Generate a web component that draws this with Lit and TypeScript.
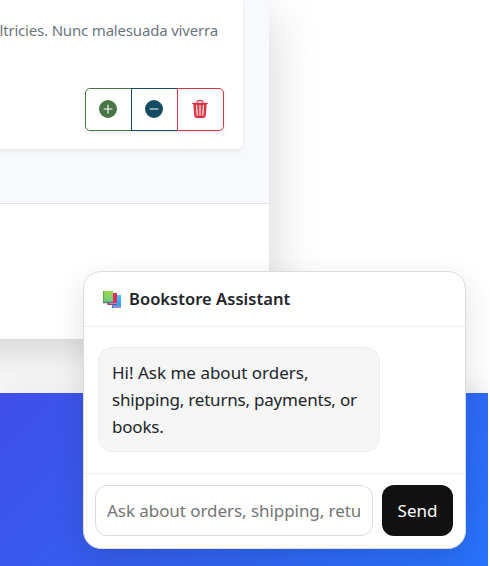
import { LitElement, html, css, svg } from "lit";
import { customElement } from "lit/decorators.js";

@customElement("cart-actions")
class CartActions extends LitElement {
  static styles = css`
    :host { display: flex; width: 139px; height: 43px; border-radius: 5px; box-shadow: 0 2px 4px rgba(0, 0, 0, 0.075); }
    button { box-sizing: border-box; width: 47px; height: 43px; padding: 0 1px 2px 0; background: #fff; border: 1px solid; display: flex; align-items: center; justify-content: center; }
    button + button { margin-left: -1px; }
    svg { width: 18px; height: 18px; fill: currentColor; display: block; }
    .add { color: #4a7446; border-radius: 5px 0 0 5px; }
    .less { color: #154c62; }
    .remove { color: #dc3545; border-radius: 0 5px 5px 0; }
  `;
  render() {
    return html`
      <button class="add" aria-label="Add one"><svg viewBox="0 0 16 16"><path d="M16 8A8 8 0 1 1 0 8a8 8 0 0 1 16 0M8.5 4.5a.5.5 0 0 0-1 0v3h-3a.5.5 0 0 0 0 1h3v3a.5.5 0 0 0 1 0v-3h3a.5.5 0 0 0 0-1h-3z"/></svg></button>
      <button class="less" aria-label="Remove one"><svg viewBox="0 0 16 16"><path d="M16 8A8 8 0 1 1 0 8a8 8 0 0 1 16 0M4.5 7.5a.5.5 0 0 0 0 1h7a.5.5 0 0 0 0-1z"/></svg></button>
      <button class="remove" aria-label="Delete"><svg viewBox="0 0 16 16"><path d="M11 1.5v1h3.5a.5.5 0 0 1 0 1h-.538l-.853 10.66A2 2 0 0 1 11.115 16h-6.23a2 2 0 0 1-1.994-1.84L2.038 3.5H1.5a.5.5 0 0 1 0-1H5v-1A1.5 1.5 0 0 1 6.5 0h3A1.5 1.5 0 0 1 11 1.5m-5 0v1h4v-1a.5.5 0 0 0-.5-.5h-3a.5.5 0 0 0-.5.5M4.5 5.029l.5 8.5a.5.5 0 1 0 .998-.06l-.5-8.5a.5.5 0 1 0-.998.06m6.53-.528a.5.5 0 0 0-.528.47l-.5 8.5a.5.5 0 0 0 .998.058l.5-8.5a.5.5 0 0 0-.47-.528M8 4.5a.5.5 0 0 0-.5.5v8.5a.5.5 0 0 0 1 0V5a.5.5 0 0 0-.5-.5"/></svg></button>
    `;
  }
}

const books = svg`
  <defs>
    <linearGradient id="green" x2="0" y2="1"><stop stop-color="#a0d84c"/><stop offset="1" stop-color="#69d083"/></linearGradient>
    <linearGradient id="blue" x2="0" y2="1"><stop stop-color="#48c5f5"/><stop offset="1" stop-color="#2b9cea"/></linearGradient>
  </defs>
  <path fill="url(#blue)" d="M9 4h9v11H9z"/><path fill="#3478c7" d="M9 15h9v2H9z"/><path fill="#b5a3df" d="M10 15.2h8v1.4h-8z"/>
  <path fill="#e92b64" d="M4.500 2H14v10H4.500z"/><path fill="#a32362" d="M4.500 12H14v2H4.500z"/><path fill="#c886c5" d="M6 12h8v1.200H6z"/>
  <path fill="url(#green)" d="M0 0h10v11H0z"/><path fill="#63a747" d="M0 0h1.200v12H0z"/><path fill="#447c62" d="M0 11h10v1.200H0z"/><path fill="#8491a3" d="M1.500 10.300H10v1H1.500z"/>`;

@customElement("chat-panel")
class ChatPanel extends LitElement {
  static styles = css`
    :host { box-sizing: border-box; display: flex; flex-direction: column; width: 383px; height: 278px; background: #fff; border: 1px solid #dcdcdc; border-radius: 18px; overflow: hidden; box-shadow: 0 10px 30px rgba(0, 0, 0, 0.12); color: #212529; font-family: "Segoe UI", "Noto Sans", sans-serif; }
    header { box-sizing: border-box; height: 55px; padding: 0 19px 2px; display: flex; align-items: center; gap: 8px; border-bottom: 1px solid #eee; }
    header svg { width: 18px; height: 17px; margin-top: 2px; }
    h2 { margin: 0; font-size: 16.5px; line-height: 27px; font-weight: 600; letter-spacing: 0.04px; white-space: nowrap; }
    .messages { flex: 1; padding: 20px 14px; }
    .bubble { box-sizing: border-box; width: 282px; height: 105px; padding: 11px 13px; border: 1px solid #ececec; border-radius: 14px; background: #f6f6f6; font-size: 17px; line-height: 27px; letter-spacing: -0.2px; white-space: nowrap; }
    .greeting { letter-spacing: 0; }
    form { box-sizing: border-box; height: 75px; padding: 11px; display: flex; gap: 9px; border-top: 1px solid #eee; }
    input { box-sizing: border-box; width: 278px; height: 51px; padding: 1px 12px 1px 11px; border: 1px solid #dcdcdc; border-radius: 12px; font: 17px "Segoe UI", "Noto Sans", sans-serif; letter-spacing: -0.06px; background: #fff; }
    input::placeholder { color: #757575; opacity: 1; }
    .send { width: 71px; height: 51px; padding: 0; border: 0; border-radius: 12px; background: #111; color: #fff; font: 17px "Segoe UI", "Noto Sans", sans-serif; }
  `;
  render() {
    return html`
      <header><svg viewBox="0 0 18 17">${books}</svg><h2>Bookstore Assistant</h2></header>
      <div class="messages"><div class="bubble"><span class="greeting">Hi! Ask me about orders,</span><br>shipping, returns, payments, or<br>books.</div></div>
      <form><input placeholder="Ask about orders, shipping, returns..."><button type="button" class="send">Send</button></form>
    `;
  }
}

@customElement("app-root")
class AppRoot extends LitElement {
  static styles = css`
    :host { display: block; position: relative; width: 490px; height: 566px; overflow: hidden; background: #fff; font-family: "Segoe UI", "Noto Sans", sans-serif; }
    .page { width: 488px; height: 393px; overflow: hidden; }
    .content { box-sizing: border-box; width: 569px; height: 339px; margin-left: -300px; background: #fff; box-shadow: 0 16px 48px rgba(0, 0, 0, 0.175); }
    .cart { box-sizing: border-box; height: 204px; background: #f8f9fc; border-bottom: 1px solid #dee2e6; }
    .card { box-sizing: border-box; width: 543px; height: 149px; padding: 18px 19px 18px 0; display: flex; flex-direction: column; justify-content: space-between; align-items: flex-end; background: #fff; border-radius: 0 0 5px 0; box-shadow: 0 2px 4px rgba(0, 0, 0, 0.075); }
    p { margin: 0 6px 0 0; color: #6c757d; font-size: 15px; line-height: 24px; letter-spacing: -0.18px; white-space: nowrap; }
    footer { position: relative; width: 488px; height: 173px; background: linear-gradient(135deg, #404fe8 0%, #2773fc 100%); box-shadow: 0 -6px 24px rgba(0, 0, 0, 0.08); clip-path: inset(-54px 0 0 0); }
    chat-panel { position: absolute; right: 24px; bottom: 17px; }
  `;
  render() {
    return html`
      <div class="page"><main class="content"><section class="cart"><article class="card"><p>ltricies. Nunc malesuada viverra</p><cart-actions></cart-actions></article></section></main></div>
      <footer></footer>
      <chat-panel></chat-panel>
    `;
  }
}
